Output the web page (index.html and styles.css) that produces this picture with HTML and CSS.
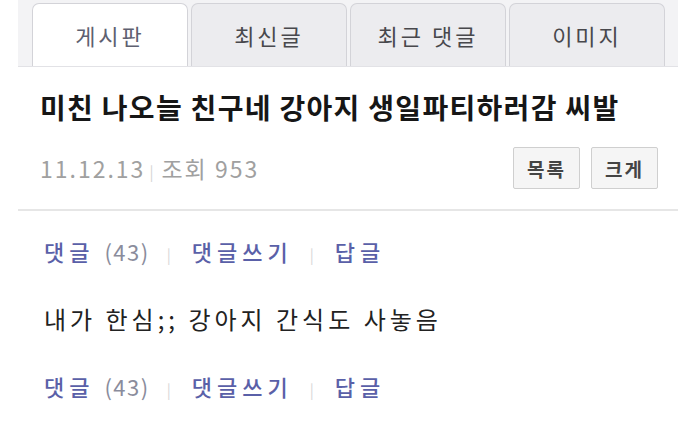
FILE: index.html
```html
<!DOCTYPE html>
<html>
    <head>
        <meta name='viewport' content='width=device-width, initial-scale=1.0'>
        <title>게시판</title>
        <link rel="stylesheet" href="styles.css">
    </head>
    <body>
        <div class='tabs'>
            <div class='tab active'>게시판</div>
            <div class='tab'>최신글</div>
            <div class='tab'>최근 댓글</div>
            <div class='tab'>이미지</div>
        </div>
        <div class='post'>
            <h1 class='title'>미친 나오늘 친구네 강아지 생일파티하러감 씨발</h1>
            <div class='meta'>
                <span class='info'>11.12.13<span class='bar'>|</span>조회 953</span>
                <span class='btns'>
                    <button class='btn'>목록</button>
                    <button class='btn'>크게</button>
                </span>
            </div>
        </div>
        <div class='comments'>
            <div class='links'>
                <a>댓글 <span class='cnt'>(43)</span></a><span class='sep'>|</span><a>댓글쓰기</a><span class='sep'>|</span><a>답글</a>
            </div>
            <p class='body'>내가 한심;; 강아지 간식도 사놓음</p>
            <div class='links'>
                <a>댓글 <span class='cnt'>(43)</span></a><span class='sep'>|</span><a>댓글쓰기</a><span class='sep'>|</span><a>답글</a>
            </div>
        </div>
    </body>
</html>
```
FILE: styles.css
```css
body {
    margin: 0;
    background: #fff;
    font-family: "Noto Sans CJK KR", "Noto Sans", sans-serif;
}
.tabs {
    display: flex;
    gap: 3px;
    width: 633px;
    margin-left: 18px;
    padding: 3px 13px 0 14px;
    background: #f3f3f5;
    border-bottom: 1px solid #e2e2e6;
}
.tab {
    flex: 1;
    height: 62px;
    line-height: 62px;
    text-align: center;
    font-size: 22px;
    letter-spacing: 3px;
    color: #48484c;
    background: #ececef;
    border: 1px solid #d3d3d8;
    border-bottom: 0;
    border-radius: 7px 7px 0 0;
}
.tab.active {
    background: #fff;
    color: #5e6070;
    margin-bottom: -1px;
}
.post {
    padding: 0 12px 9px 40px;
}
.title {
    margin: 0;
    padding-top: 20px;
    font-size: 28px;
    font-weight: bold;
    color: #161616;
    line-height: 40px;
    letter-spacing: 1.3px;
}
.meta {
    display: flex;
    justify-content: space-between;
    align-items: center;
    height: 64px;
    margin-top: 9px;
    padding-right: 20px;
}
.info {
    font-size: 23px;
    letter-spacing: 2px;
    color: #a0a0a0;
}
.bar {
    color: #d4d4d4;
    font-size: 15px;
    margin: 0 6px 0 4px;
}
.btns {
    display: flex;
    gap: 11px;
}
.btn {
    width: 67px;
    height: 42px;
    font-family: inherit;
    font-size: 19px;
    letter-spacing: 2px;
    font-weight: bold;
    color: #444;
    background: #f5f5f5;
    border: 1px solid #cfcfcf;
    border-radius: 2px;
}
.comments {
    margin-left: 18px;
    width: 660px;
    border-top: 2px solid #e6e6e6;
    border-bottom: 2px solid #ececec;
    padding: 0 0 16px 26px;
    box-sizing: border-box;
}
.links {
    font-size: 22px;
    letter-spacing: 5px;
    color: #5a60a8;
    line-height: 30px;
    padding-top: 25px;
}
.links a {
    font-weight: 500;
}
.cnt {
    color: #8a8c9c;
    font-weight: normal;
    letter-spacing: 1.5px;
}
.sep {
    color: #d8d8d8;
    font-size: 15px;
    margin: 0 16px 0 17px;
}
.body {
    margin: 0;
    padding-top: 34px;
    font-size: 24px;
    letter-spacing: 4px;
    color: #222;
    line-height: 30px;
}
.body + .links {
    padding-top: 37px;
}
```
